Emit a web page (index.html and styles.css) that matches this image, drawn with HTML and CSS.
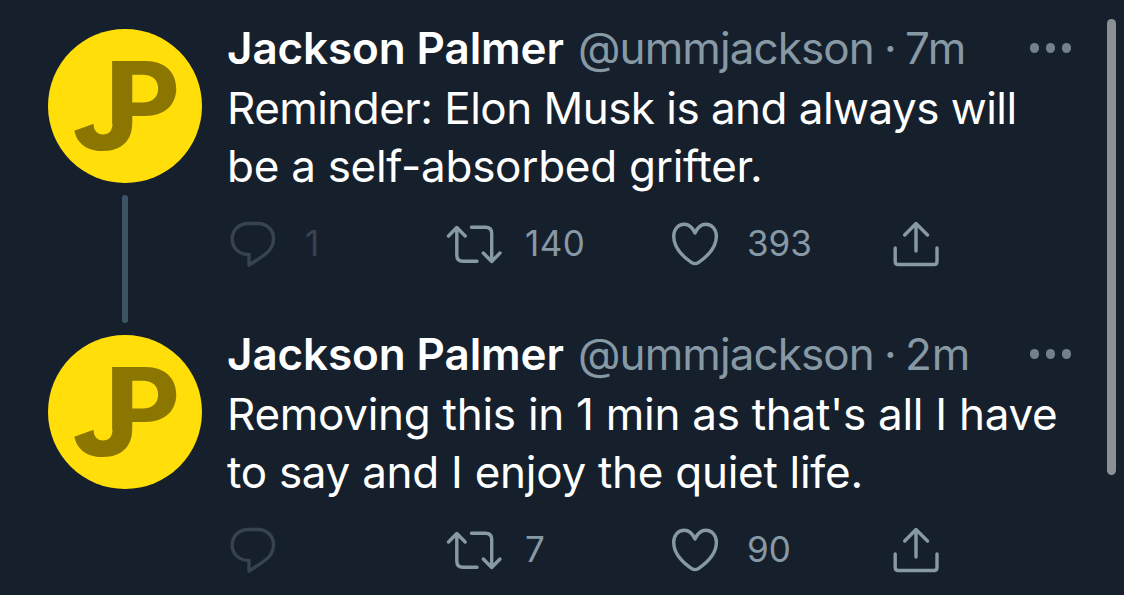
FILE: index.html
```
<!DOCTYPE html>
<html lang="en">
<head>
  <meta charset="UTF-8" />
  <title>Thread</title>
  <link rel="stylesheet" href="styles.css">
</head>
<body>
  <!-- shared icons -->
  <svg class="sprite" width="0" height="0">
    <clipPath id="cutJ">
      <polygon points="20,104 45,95 60,95 60,20 90,20 90,130 20,130" />
    </clipPath>
    <clipPath id="cutP">
      <rect x="62" y="20" width="80" height="75" />
    </clipPath>
    <symbol id="logo" viewBox="0 0 154 154">
      <circle cx="77" cy="77" r="77" fill="#ffde0a" />
      <g class="logo-letters">
        <g clip-path="url(#cutJ)">
          <text class="logo-j" transform="translate(22.5 121) scale(0.95 1)" font-size="122">J</text>
        </g>
        <g clip-path="url(#cutP)">
          <text transform="translate(56.5 113.5) scale(1.05 1)" font-size="112">P</text>
        </g>
      </g>
    </symbol>
    <symbol id="reply" viewBox="0 0 60 60">
      <path d="M20.5 9.5H30C39 9.5 45.5 16 45.5 24.5C45.5 37 36 41.5 21 51V40.5C11 40.5 4.2 34 4.2 25C4.2 16 11 9.5 20.5 9.5Z" />
    </symbol>
    <symbol id="retweet" viewBox="0 0 60 60">
      <path d="M3.5 22L11.8 13.5L20.2 22M11.8 14V41Q11.8 47.3 18 47.3H32M26.5 13.3H40.5Q46.7 13.3 46.7 19.5V46.5M38.3 39L46.7 47.5L55 39" />
    </symbol>
    <symbol id="like" viewBox="0 0 60 60">
      <path d="M25 19C22.5 13.5 18.5 10.3 14.2 10.3C8 10.3 3.7 15.5 3.7 22.3C3.7 34 14 43.5 22 48.8Q25 50.5 28 48.8C36 43.5 46.4 34 46.4 22.3C46.4 15.5 42 10.3 35.8 10.3C31.5 10.3 27.5 13.5 25 19Z" />
    </symbol>
    <symbol id="share" viewBox="0 0 60 60">
      <path d="M25 10V37M13.7 21L25 9.5L36.5 21M4.2 34V47.5Q4.2 50.5 7.2 50.5H43Q46 50.5 46 47.5V34" />
    </symbol>
  </svg>

  <div class="thread">
    <div class="tweet">
      <div class="side">
        <svg class="avatar"><use href="#logo" /></svg>
        <div class="line"></div>
      </div>
      <div class="content">
        <div class="header">
          <span class="name">Jackson Palmer</span>
          <span class="handle">@ummjackson</span>
          <span class="sep">·</span>
          <span class="time">7m</span>
          <span class="more"><i></i><i></i><i></i></span>
        </div>
        <div class="text">
          <div class="tight">Reminder: Elon Musk is and always will</div>
          <div>be a self-absorbed grifter.</div>
        </div>
        <div class="actions">
          <div class="action off"><svg><use href="#reply" /></svg><span>1</span></div>
          <div class="action retweets"><svg><use href="#retweet" /></svg><span>140</span></div>
          <div class="action"><svg><use href="#like" /></svg><span>393</span></div>
          <div class="action"><svg><use href="#share" /></svg></div>
        </div>
      </div>
    </div>

    <div class="tweet">
      <div class="side">
        <svg class="avatar"><use href="#logo" /></svg>
      </div>
      <div class="content">
        <div class="header">
          <span class="name">Jackson Palmer</span>
          <span class="handle">@ummjackson</span>
          <span class="sep">·</span>
          <span class="time">2m</span>
          <span class="more"><i></i><i></i><i></i></span>
        </div>
        <div class="text">
          <div>Removing this in 1 min as that's all I have</div>
          <div>to say and I enjoy the quiet life.</div>
        </div>
        <div class="actions">
          <div class="action off"><svg><use href="#reply" /></svg></div>
          <div class="action retweets"><svg><use href="#retweet" /></svg><span>7</span></div>
          <div class="action"><svg><use href="#like" /></svg><span>90</span></div>
          <div class="action"><svg><use href="#share" /></svg></div>
        </div>
      </div>
    </div>
  </div>
  <div class="scrollbar"></div>
</body>
</html>
```

FILE: styles.css
```
* {
  box-sizing: border-box;
}
body {
  margin: 0;
  height: 595px;
  overflow: hidden;
  position: relative;
  background: #16202c;
  color: #fff;
  font-family: Inter, "Liberation Sans", sans-serif;
}
.sprite {
  position: absolute;
}
.thread {
  height: 595px;
  padding: 19px 53px 0 48px;
}
.tweet {
  display: flex;
  gap: 25px;
  height: 306px;
}
.tweet:last-child {
  height: 270px;
}
.side {
  width: 154px;
  padding-top: 10px;
  display: flex;
  flex-direction: column;
  align-items: center;
}
.avatar {
  display: block;
  width: 154px;
  height: 154px;
}
.logo-letters {
  fill: #8c7602;
  font-family: Inter, sans-serif;
  font-weight: 700;
}
.logo-j {
  font-weight: 800;
}
.line {
  width: 6px;
  height: 128px;
  margin-top: 12px;
  border-radius: 3px;
  background: #3d5466;
}
.content {
  flex: 1;
  white-space: nowrap;
}
.header {
  display: flex;
  height: 58px;
  font-size: 44px;
  line-height: 58px;
  color: #8899a6;
}
.name {
  width: 351px;
  color: #fff;
  font-weight: 600;
  letter-spacing: -0.1px;
}
.handle {
  width: 306px;
  letter-spacing: -0.9px;
}
.sep {
  width: 21px;
}
.more {
  display: flex;
  gap: 6.5px;
  margin-left: auto;
  align-items: center;
}
.more i {
  width: 9.3px;
  height: 9.3px;
  border-radius: 50%;
  background: #73818e;
}
.text {
  margin-top: 2px;
  font-size: 44px;
  line-height: 58px;
  letter-spacing: -0.28px;
}
.tight {
  letter-spacing: -0.54px;
}
.actions {
  display: grid;
  grid-template-columns: 217px 225px 221px 80px;
  margin: 19px 0 0 1px;
}
.action {
  display: flex;
  align-items: center;
  gap: 17px;
  height: 60px;
  font-size: 35px;
  line-height: 59px;
  color: #8899a6;
}
.retweets {
  gap: 20px;
  letter-spacing: 0.5px;
}
.action span {
  height: 60px;
}
.action svg {
  width: 60px;
  height: 60px;
  fill: none;
  stroke: currentColor;
  stroke-width: 3.4px;
  stroke-linecap: round;
  stroke-linejoin: round;
}
.off {
  color: #37434f;
}
.scrollbar {
  position: absolute;
  top: 19px;
  right: 8px;
  width: 9px;
  height: 456px;
  border-radius: 5px;
  background: #8b8f96;
}
```
